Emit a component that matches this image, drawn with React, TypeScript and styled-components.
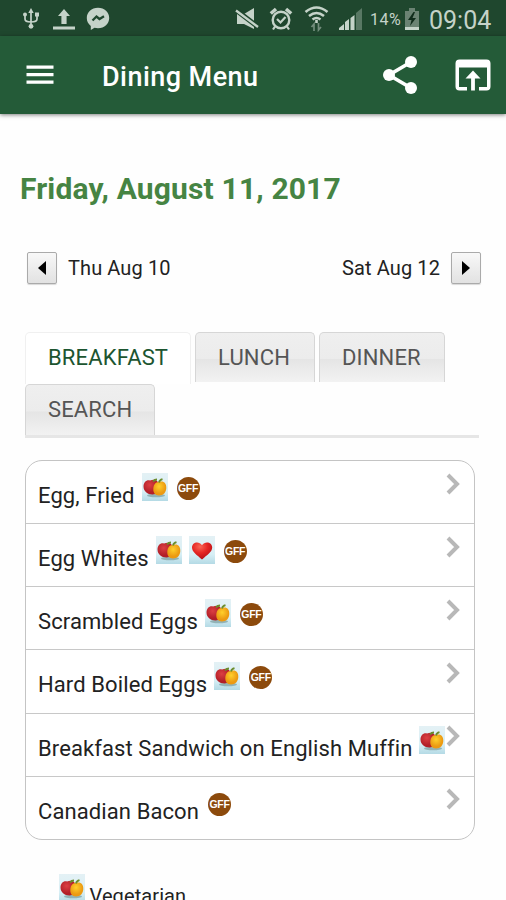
import React from 'react';
import styled, { createGlobalStyle } from 'styled-components';

const GlobalStyle = createGlobalStyle`
  * { box-sizing: border-box; }
  html, body { margin: 0; padding: 0; background: #fff; }
  body { font-family: Roboto, "Liberation Sans", sans-serif; overflow: hidden; }
  svg { display: block; flex: none; }
`;

const Screen = styled.div`
  width: 506px;
  height: 900px;
  overflow: hidden;
  background: #fefefe;
  display: flex;
  flex-direction: column;
`;

const StatusBar = styled.div`
  height: 36px;
  flex: none;
  background: #1f472e;
  color: #c5d3c9;
  display: flex;
  justify-content: space-between;
  padding: 0 15px 0 21px;
`;

const StatusGroup = styled.div`
  display: flex;
  align-items: center;
  padding-top: 2px;
`;

const Gap = styled.span<{ $w: number }>`
  width: ${(p) => p.$w}px;
  flex: none;
`;

const Percent = styled.span`
  width: 31px;
  margin: 1px 3px 0 7px;
  font-size: 16px;
  letter-spacing: 0.5px;
  white-space: nowrap;
`;

const Clock = styled.span`
  width: 62px;
  margin: 3px 0 0 9px;
  font-size: 25px;
  line-height: 34px;
  white-space: nowrap;
`;

const AppBar = styled.header`
  height: 78px;
  flex: none;
  background: #245b38;
  box-shadow: 0 1px 4px rgba(0, 0, 0, 0.5);
  color: #fff;
  display: flex;
  align-items: center;
  padding: 0 15px 0 26px;
`;

const Title = styled.h1`
  flex: 1;
  margin: 3px 0 0 48px;
  font-size: 27px;
  letter-spacing: 0.45px;
  font-weight: 500;
  line-height: 32px;
`;

const Content = styled.main`
  padding: 57px 25px 0;
`;

const DateHeading = styled.h2`
  margin: 0 0 0 -5px;
  font-size: 30px;
  letter-spacing: 0.15px;
  line-height: 36px;
  font-weight: 700;
  color: #468443;
`;

const DayNav = styled.nav`
  display: flex;
  justify-content: space-between;
  margin: 45px 0 0 2px;
`;

const DayLink = styled.div`
  display: flex;
  align-items: center;
  gap: 11px;
  font-size: 20px;
  letter-spacing: 0.1px;
  color: #222;
`;

const DayButton = styled.button`
  width: 30px;
  height: 32px;
  padding: 0;
  border: 1px solid #aaa;
  border-radius: 2px;
  background: linear-gradient(#f8f8f8, #e2e2e2);
  box-shadow: 0 1px 1px rgba(0, 0, 0, 0.15);
  display: flex;
  align-items: center;
  justify-content: center;
`;

const Tabs = styled.div`
  width: 454px;
  height: 106px;
  margin-top: 48px;
  border-bottom: 3px solid #e6e6e6;
  display: flex;
  flex-wrap: wrap;
  align-content: flex-start;
  column-gap: 4px;
`;

const Tab = styled.div<{ $w: number; $active?: boolean; $last?: boolean }>`
  width: ${(p) => p.$w}px;
  height: ${(p) => (p.$active ? 52 : p.$last ? 51 : 50)}px;
  padding-left: 22px;
  border: 1px solid ${(p) => (p.$active ? '#f0f0f0' : '#d6d6d6')};
  border-bottom: 0;
  border-radius: 5px 5px 0 0;
  background: ${(p) => (p.$active ? '#fff' : 'linear-gradient(#efefef 0, #ececec 52%, #e5e5e5 54%, #f2f2f2 100%)')};
  color: ${(p) => (p.$active ? '#1c5530' : '#555')};
  font-size: 22px;
  letter-spacing: 0.15px;
  line-height: 49px;
  white-space: nowrap;
`;

const List = styled.ul`
  width: 450px;
  height: 380px;
  margin: 22px 0 0;
  padding: 0;
  list-style: none;
  border: 1px solid #c4c4c4;
  border-radius: 17px;
  background: #fff;
  display: grid;
  grid-template-rows: 62px repeat(5, 1fr);
`;

const Row = styled.li`
  display: flex;
  align-items: flex-start;
  padding: 0 14px 0 12px;
  & + & { border-top: 1px solid #c8c8c8; }
`;

const RowName = styled.span`
  padding-top: 21px;
  font-size: 22px;
  letter-spacing: 0.1px;
  line-height: 28px;
  color: #222;
  white-space: nowrap;
`;

const Badges = styled.span`
  display: flex;
  gap: 7px;
  padding: 12px 0 0 7px;
`;

const Chevron = styled.svg`
  margin: 11.5px 0 0 auto;
`;

const Legend = styled.div`
  display: flex;
  gap: 5px;
  padding: 34px 0 0 33.5px;
  font-size: 20px;
  letter-spacing: 0.1px;
  color: #222;
`;

const LegendText = styled.span`
  padding-top: 10px;
  line-height: 24px;
`;

const Usb = () => (
  <svg width="20" height="22" viewBox="0 0 20 22" fill="none" stroke="currentColor" strokeWidth="1.7">
    <path d="M10 3v15M4 7v4q0 3 6 3q6 0 6-3V7" />
    <path d="M7.3 5 10 0l2.700 5z" fill="currentColor" stroke="none" />
    <circle cx="4" cy="6.500" r="2" fill="currentColor" stroke="none" />
    <path d="M14 4.500h4v4h-4z" fill="currentColor" stroke="none" />
    <circle cx="10" cy="18.300" r="2.400" fill="currentColor" stroke="none" />
  </svg>
);

const Upload = () => (
  <svg width="22" height="22" viewBox="0 0 22 22" fill="currentColor">
    <path d="M11 1 17 8h-3.400v8H8.400V8H5zM0 18.500h22v3H0z" />
  </svg>
);

const Messenger = () => (
  <svg width="24" height="24" viewBox="0 0 24 24">
    <path d="M12 .8C5.500.8.800 5.200.800 11c0 3.400 1.500 6 4 7.900V23l3.700-2.200c1.100.3 2.300.5 3.500.5 6.500 0 11.200-4.500 11.200-10.300S18.500.8 12 .8z" fill="currentColor" />
    <path d="m6.500 13.500 4-4 3 2.500 4.500-2.700" fill="none" stroke="#1f472e" strokeWidth="2.300" />
  </svg>
);

const Mute = () => (
  <svg width="24" height="22" viewBox="0 0 24 22">
    <path d="M2 6h7l10-6v21L9 16H2z" fill="currentColor" />
    <path d="m1 2 22 17" stroke="#1f472e" strokeWidth="5" />
    <path d="m1 2.500 22 16.500" stroke="currentColor" strokeWidth="2.300" />
  </svg>
);

const Alarm = () => (
  <svg width="24" height="24" viewBox="0 0 24 24" fill="none" stroke="currentColor" strokeWidth="2.400">
    <circle cx="12" cy="13" r="8.300" />
    <path d="M1.800 6.500 7 2M22.200 6.500 17 2" strokeWidth="3.500" />
    <path d="m8 12 3.500 3.500 5-5.500M6 19.500l-2 3M18 19.500l2 3" strokeWidth="2.200" />
  </svg>
);

const Wifi = () => (
  <svg width="25" height="26" viewBox="0 0 25 26" fill="none" stroke="currentColor" strokeWidth="2.600">
    <path d="M1.500 6q11-9 22 0M5 10q7.500-6 15 0M8.500 13.500q4-3 8 0" />
    <path d="M12.500 14v3" />
    <path d="M10 25v-7l-2.500 3M14.500 17v7l2.500-3" strokeWidth="1.700" opacity=".5" />
  </svg>
);

const Signal = () => (
  <svg width="24" height="24" viewBox="0 0 24 24" fill="currentColor">
    <path d="M0 23v-2l5-4v6zM6 23v-8l4-3v11zM11.500 23V11l4-3v15z" />
    <path d="M17 23V6l6-5v22z" opacity=".35" />
  </svg>
);

const Battery = () => (
  <svg width="16" height="24" viewBox="0 0 16 24">
    <path d="M5 1h6v3h4v19H1V4h4z" fill="#6b8373" />
    <path d="M1 20h14v3H1z" fill="#c5d3c9" />
    <path d="M9.500 5 4 13h3.500L6 19l6-8H8.500L11 5z" fill="#102c1b" />
  </svg>
);

const Menu = () => (
  <svg width="28" height="20" viewBox="0 0 28 20" fill="#fff">
    <path d="M.5 .5h27v3.300H.5zM.5 8h27v3.300H.5zM.5 15.500h27v3.300H.5z" />
  </svg>
);

const Share = () => (
  <svg width="36" height="40" viewBox="0 0 36 40">
    <path d="M29 7 7 20l22 13" fill="none" stroke="#fff" strokeWidth="3.700" />
    <g fill="#fff">
      <circle cx="29" cy="7" r="6" />
      <circle cx="7" cy="20" r="6" />
      <circle cx="29" cy="33" r="6" />
    </g>
  </svg>
);

const OpenIn = () => (
  <svg width="36" height="32" viewBox="0 0 36 32" fill="#fff">
    <path d="M4.500.5h27q4 0 4 4v23q0 4-4 4H24V28h8V8.500H4V28h8v3.500H4.500q-4 0-4-4v-23q0-4 4-4z" />
    <path d="m18 11.500 7.500 8h-5.600v12h-3.800v-12h-5.600z" />
  </svg>
);

const Arrow = ({ left }: { left?: boolean }) => (
  <svg width="10" height="14" viewBox="0 0 10 14">
    <path d={left ? 'M9 0v14L1 7z' : 'M1 0v14l8-7z'} fill="#000" />
  </svg>
);

const Tile = () => (
  <>
    <defs>
      <linearGradient id="tile" x2="0" y2="1">
        <stop offset="0" stopColor="#e4f1f5" />
        <stop offset=".65" stopColor="#d8eff5" />
        <stop offset="1" stopColor="#b4dae5" />
      </linearGradient>
      <radialGradient id="red" cx=".4" cy=".35">
        <stop offset="0" stopColor="#dc3f42" />
        <stop offset="1" stopColor="#b21f28" />
      </radialGradient>
      <radialGradient id="gold" cx=".45" cy=".35">
        <stop offset="0" stopColor="#ffd02c" />
        <stop offset="1" stopColor="#ec9a12" />
      </radialGradient>
      <radialGradient id="heart" cx=".4" cy=".25" r=".75">
        <stop offset="0" stopColor="#fa6655" />
        <stop offset=".5" stopColor="#e52623" />
        <stop offset="1" stopColor="#b40f16" />
      </radialGradient>
    </defs>
    <rect width="26" height="28" fill="url(#tile)" />
  </>
);

const Veg = () => (
  <svg width="26" height="28" viewBox="0 0 26 28">
    <Tile />
    <ellipse cx="14" cy="22.500" rx="9" ry="1.800" fill="#92b3b6" />
    <path d="M8 7.500c5-2 9 0 9 6 0 5-3 8-6.500 8C5.500 21.500 1.500 18 1.500 13.500c0-4 3-7 6.500-6z" fill="url(#red)" />
    <path d="M17 9c4.500-1.500 7.500 1 7.300 6-.2 4.500-2.800 7.500-7.300 7.500-4 0-6-3.300-5.700-7 .3-4 2.700-7 5.700-6.500z" fill="url(#gold)" />
    <path d="M11 8.500q1.500-2 4-2M17 9.500q.5-2.500 3.500-3.300" fill="none" stroke="#6b8c2c" strokeWidth="1.800" />
  </svg>
);

const Heart = () => (
  <svg width="26" height="28" viewBox="0 0 26 28">
    <Tile />
    <path d="M13 23.500C8 19 3 16 3 11.500c0-5.500 7-7 10-2.300 3-4.700 10.200-3.200 10.200 2.300 0 4.500-5.200 7.500-10.200 12z" fill="url(#heart)" />
  </svg>
);

const GffDisc = styled.span`
  width: 23px;
  height: 23px;
  margin: 4px 0 0 2px;
  border-radius: 50%;
  background: #8c4a0c;
  color: #fff;
  font-family: "Liberation Sans", Arial, sans-serif;
  font-size: 10.5px;
  font-weight: 700;
  line-height: 22px;
  letter-spacing: -0.3px;
  display: flex;
  justify-content: center;
`;

type Badge = 'veg' | 'heart' | 'gff';

const badgeOf: Record<Badge, React.ReactNode> = {
  veg: <Veg key="veg" />,
  heart: <Heart key="heart" />,
  gff: <GffDisc key="gff">GFF</GffDisc>,
};

const dishes: { name: string; badges: Badge[] }[] = [
  { name: 'Egg, Fried', badges: ['veg', 'gff'] },
  { name: 'Egg Whites', badges: ['veg', 'heart', 'gff'] },
  { name: 'Scrambled Eggs', badges: ['veg', 'gff'] },
  { name: 'Hard Boiled Eggs', badges: ['veg', 'gff'] },
  { name: 'Breakfast Sandwich on English Muffin', badges: ['veg'] },
  { name: 'Canadian Bacon', badges: ['gff'] },
];

export default function App() {
  return (
    <Screen>
      <GlobalStyle />
      <StatusBar>
        <StatusGroup>
          <Usb />
          <Gap $w={12} />
          <Upload />
          <Gap $w={11} />
          <Messenger />
        </StatusGroup>
        <StatusGroup>
          <Mute />
          <Gap $w={10} />
          <Alarm />
          <Gap $w={11} />
          <Wifi />
          <Gap $w={10} />
          <Signal />
          <Percent>14%</Percent>
          <Battery />
          <Clock>09:04</Clock>
        </StatusGroup>
      </StatusBar>
      <AppBar>
        <Menu />
        <Title>Dining Menu</Title>
        <Share />
        <Gap $w={37} />
        <OpenIn />
      </AppBar>
      <Content>
        <DateHeading>Friday, August 11, 2017</DateHeading>
        <DayNav>
          <DayLink>
            <DayButton aria-label="Previous day"><Arrow left /></DayButton>
            <span>Thu Aug 10</span>
          </DayLink>
          <DayLink>
            <span>Sat Aug 12</span>
            <DayButton aria-label="Next day"><Arrow /></DayButton>
          </DayLink>
        </DayNav>
        <Tabs>
          <Tab $w={166} $active>BREAKFAST</Tab>
          <Tab $w={120}>LUNCH</Tab>
          <Tab $w={126}>DINNER</Tab>
          <Tab $w={130} $last>SEARCH</Tab>
        </Tabs>
        <List>
          {dishes.map((d) => (
            <Row key={d.name}>
              <RowName>{d.name}</RowName>
              <Badges>{d.badges.map((b) => badgeOf[b])}</Badges>
              <Chevron width="14" height="22" viewBox="0 0 14 22">
                <path d="m2 2 9 9-9 9" fill="none" stroke="#b8b8b8" strokeWidth="4" />
              </Chevron>
            </Row>
          ))}
        </List>
        <Legend>
          <Veg />
          <LegendText>Vegetarian</LegendText>
        </Legend>
      </Content>
    </Screen>
  );
}
